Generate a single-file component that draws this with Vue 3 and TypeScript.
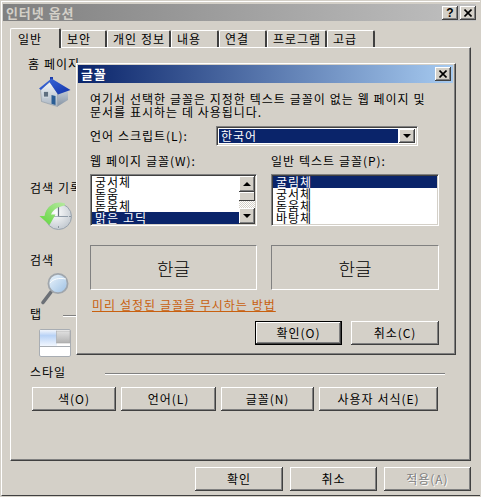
<script setup lang="ts">
const tabs: string[] = ['일반', '보안', '개인 정보', '내용', '연결', '프로그램', '고급']
const webFonts: string[] = ['궁서체', '돋움', '돋움체', '맑은 고딕']
const textFonts: string[] = ['굴림체', '궁서체', '돋움체', '바탕체']
</script>

<template>
  <div class="window">
    <div class="frame">
      <header class="titlebar inactive">
        <span class="title-text">인터넷 옵션</span>
        <div class="title-buttons">
          <button class="cap help">?</button>
          <button class="cap">
            <svg width="8" height="8" viewBox="0 0 8 8"><path d="M0.5 0.5 7.5 7.5M7.5 0.5 0.5 7.5" stroke="#000" stroke-width="1.6" /></svg>
          </button>
        </div>
      </header>

      <nav class="tabs">
        <div v-for="(t, i) in tabs" :key="t" class="tab" :class="{ active: i === 0 }">{{ t }}</div>
      </nav>

      <main class="panel">
        <section class="sec sec-home">
          <div class="sec-head"><span class="label home-label">홈 페이지</span><span class="rule"></span></div>
          <svg class="icon" width="46" height="40" viewBox="0 0 46 40">
            <defs>
              <linearGradient id="wall" x1="0" y1="0" x2="0" y2="1"><stop offset="0" stop-color="#f2f5f8" /><stop offset="1" stop-color="#a9b5c2" /></linearGradient>
              <linearGradient id="wall2" x1="0" y1="0" x2="0" y2="1"><stop offset="0" stop-color="#c4ccd6" /><stop offset="1" stop-color="#8593a3" /></linearGradient>
              <linearGradient id="roof" x1="0" y1="0" x2="1" y2="1"><stop offset="0" stop-color="#3f6fe0" /><stop offset="1" stop-color="#1232a8" /></linearGradient>
            </defs>
            <path d="M28 22 38 18V28L27.5 34.5Z" fill="url(#wall2)" />
            <path d="M10.5 17 20 10 27.5 21V34.5L11.5 29.5Z" fill="url(#wall)" stroke="#8c97a4" stroke-width=".6" />
            <rect x="20" y="5" width="3" height="4" fill="#1d3caa" />
            <path d="M21.5 6.5 40.5 18 28 22.5 19.5 10 11 18 9 16.5Z" fill="url(#roof)" />
            <rect x="13.5" y="19.5" width="5" height="5.5" fill="#5f6f80" stroke="#dfe5ea" stroke-width=".7" />
            <path d="M21.5 23 25.5 24V33L21.5 31.8Z" fill="#2a5d94" />
          </svg>
        </section>

        <section class="sec sec-history">
          <div class="sec-head"><span class="label label-wide">검색 기록</span><span class="rule"></span></div>
          <svg class="icon icon-low" width="46" height="40" viewBox="0 0 46 40">
            <defs>
              <radialGradient id="face" cx=".4" cy=".35" r=".8"><stop offset="0" stop-color="#fff" /><stop offset="1" stop-color="#b8c0c8" /></radialGradient>
              <linearGradient id="green" x1="0" y1="1" x2="1" y2="0"><stop offset="0" stop-color="#5fd63a" /><stop offset="1" stop-color="#b6e8a0" /></linearGradient>
            </defs>
            <circle cx="28.5" cy="18.5" r="13" fill="url(#face)" stroke="#98a2ac" />
            <path d="M28.5 9V18.5H38" fill="none" stroke="#68747f" stroke-width="1.2" />
            <path d="M20 18.5H38" stroke="#9aa6b2" stroke-width=".8" />
            <g fill="#8c96a0">
              <rect x="28" y="7" width="1" height="2" /><rect x="28" y="28" width="1" height="2" /><rect x="39" y="18" width="2" height="1" />
            </g>
            <path d="M35 5.5C26 2.5 17 7 14.5 18H9.5L19.5 27 25.5 16.5H21C23 11.5 28 8.5 35 7.5Z" fill="url(#green)" />
          </svg>
        </section>

        <section class="sec sec-search">
          <div class="sec-head"><span class="label label-wide">검색</span><span class="rule"></span></div>
          <svg class="icon" width="46" height="40" viewBox="0 0 46 40">
            <defs>
              <linearGradient id="lens" x1="0" y1="0" x2="1" y2="1"><stop offset="0" stop-color="#eef6fc" /><stop offset="1" stop-color="#9cc0e4" /></linearGradient>
            </defs>
            <path d="M13 34.5 21 24" stroke="#6c7076" stroke-width="3.6" stroke-linecap="round" />
            <circle cx="28" cy="15.5" r="9.6" fill="url(#lens)" stroke="#a0a6ac" stroke-width="1.8" />
            <path d="M20 15C23 11 29 9.5 36 11" fill="none" stroke="#ffffff" stroke-width=".9" />
          </svg>
        </section>

        <section class="sec sec-tabs">
          <div class="sec-head"><span class="label label-tab">탭</span><span class="rule"></span></div>
          <svg class="icon" width="46" height="40" viewBox="0 0 46 40">
            <defs>
              <linearGradient id="tabBlue" x1="0" y1="0" x2="0" y2="1"><stop offset="0" stop-color="#f2f5fb" /><stop offset=".35" stop-color="#b8d2f6" /><stop offset="1" stop-color="#f2f7fe" /></linearGradient>
              <linearGradient id="tabGray" x1="0" y1="0" x2="0" y2="1"><stop offset="0" stop-color="#e0e0e0" /><stop offset="1" stop-color="#b2b2b2" /></linearGradient>
            </defs>
            <rect x="9.5" y="7.5" width="31" height="27" rx="1.5" fill="#fff" stroke="#a8adb3" />
            <rect x="10" y="8" width="17" height="16" fill="url(#tabBlue)" />
            <rect x="26.5" y="9" width="13.5" height="12" fill="url(#tabGray)" stroke="#a8a8a8" stroke-width=".6" />
            <path d="M10 24.5H40.5" stroke="#a8adb3" />
          </svg>
        </section>

        <section class="sec-style">
          <div class="sec-head"><span class="label label-style">스타일</span><span class="rule"></span></div>
          <div class="style-buttons">
            <button class="btn w-color">색(O)</button>
            <button class="btn w-lang">언어(L)</button>
            <button class="btn w-font">글꼴(N)</button>
            <button class="btn w-custom">사용자 서식(E)</button>
          </div>
        </section>
      </main>

      <footer class="footer">
        <button class="btn w-ok">확인</button>
        <button class="btn w-foot">취소</button>
        <button class="btn w-foot disabled">적용(A)</button>
      </footer>
    </div>

    <div class="dialog">
      <header class="titlebar active-title">
        <span class="title-text">글꼴</span>
        <button class="cap">
          <svg width="8" height="8" viewBox="0 0 8 8"><path d="M0.5 0.5 7.5 7.5M7.5 0.5 0.5 7.5" stroke="#000" stroke-width="1.6" /></svg>
        </button>
      </header>
      <div class="dlg-body">
        <p class="intro">여기서 선택한 글꼴은 지정한 텍스트 글꼴이 없는 웹 페이지 및<br />문서를 표시하는 데 사용됩니다.</p>
        <div class="combo-row">
          <span class="combo-label">언어 스크립트(L):</span>
          <div class="combo">
            <span class="combo-value">한국어</span>
            <span class="sb-btn combo-btn"><i class="tri down"></i></span>
          </div>
        </div>
        <div class="font-grid">
          <span class="col-label">웹 페이지 글꼴(W):</span>
          <span class="col-label">일반 텍스트 글꼴(P):</span>
          <div class="list">
            <div class="rows">
              <div v-for="(f, i) in webFonts" :key="f" class="row" :class="{ sel: i === 3 }">{{ f }}</div>
            </div>
            <div class="scroll">
              <span class="sb-btn"><i class="tri up"></i></span>
              <span class="thumb"></span>
              <span class="track"></span>
              <span class="sb-btn"><i class="tri down"></i></span>
            </div>
          </div>
          <div class="list">
            <div class="rows">
              <div v-for="(f, i) in textFonts" :key="f" class="row" :class="{ sel: i === 0 }">{{ f }}</div>
            </div>
          </div>
          <div class="preview">한글</div>
          <div class="preview">한글</div>
        </div>
        <a class="link">미리 설정된 글꼴을 무시하는 방법</a>
        <div class="dlg-actions">
          <button class="btn default w-dok">확인(O)</button>
          <button class="btn w-dcancel">취소(C)</button>
        </div>
      </div>
    </div>
  </div>
</template>

<style scoped>
.window {
  position: relative;
  box-sizing: border-box;
  width: 481px;
  height: 497px;
  overflow: hidden;
  border: 1px solid #d4d0c8;
  background: #d4d0c8;
  color: #000;
  font-family: "Noto Sans CJK KR", "Liberation Sans", sans-serif;
  font-size: 12px;
  letter-spacing: 0.96px;
  word-spacing: 0.3px;
  line-height: 14px;
}
.frame {
  box-sizing: border-box;
  height: 100%;
  padding: 2px 4px 0 1px;
  border-top: 1px solid #fff;
  border-left: 1px solid #fff;
  border-bottom: 1px solid #404040;
}
.titlebar {
  display: flex;
  align-items: center;
  justify-content: space-between;
  box-sizing: border-box;
}
.titlebar.inactive {
  height: 17px;
  padding: 0 0 0 3px;
  background: linear-gradient(90deg, #808080, #c0c0c0);
  color: #d4d0c8;
}
.title-text {
  font-size: 13px;
  font-weight: 700;
  letter-spacing: 0.9px;
}
.title-buttons {
  display: flex;
  gap: 2px;
}
.cap {
  display: flex;
  align-items: center;
  justify-content: center;
  box-sizing: border-box;
  width: 16px;
  height: 14px;
  padding: 0;
  border: 0;
  background: #d4d0c8;
  box-shadow: inset -1px -1px #404040, inset 1px 1px #fff, inset -2px -2px #808080;
  font: 700 12px/14px "Liberation Sans", sans-serif;
  color: #000;
}
.tabs {
  display: flex;
  align-items: flex-end;
  height: 19px;
  margin: 7px 0 0 7px;
}
.tab {
  box-sizing: border-box;
  height: 17px;
  padding: 1px 0 0 5px;
  background: #d4d0c8;
  border-top: 1px solid #fff;
  border-left: 1px solid #fff;
  border-right: 2px solid #404040;
  border-top-left-radius: 2px;
  border-top-right-radius: 2px;
  white-space: nowrap;
}
.tab:nth-child(1) { width: 51px; }
.tab:nth-child(2) { width: 46px; }
.tab:nth-child(3) { width: 64px; }
.tab:nth-child(4) { width: 48px; }
.tab:nth-child(5) { width: 48px; }
.tab:nth-child(6) { width: 60px; }
.tab:nth-child(7) { width: 48px; }
.tab.active {
  position: relative;
  z-index: 1;
  height: 20px;
  margin-bottom: -1px;
  padding: 3px 0 0 7px;
}
.panel {
  box-sizing: border-box;
  width: 461px;
  height: 414px;
  margin-left: 7px;
  padding: 9px 25px 0 19px;
  border-top: 1px solid #fff;
  border-left: 1px solid #fff;
  border-right: 1px solid #404040;
  border-bottom: 1px solid #404040;
  box-shadow: inset -1px -1px #808080;
}
.sec-home { height: 124px; }
.sec-history { height: 72px; }
.sec-search { height: 54px; }
.sec-tabs { height: 58px; }
.sec-head {
  display: flex;
  align-items: center;
  height: 14px;
}
.label { flex: none; white-space: nowrap; }
.home-label { margin-left: -2px; width: 77px; }
.label-wide { width: 77px; }
.label-tab { width: 33px; }
.label-style { width: 75px; }
.rule {
  flex: 1;
  height: 2px;
  margin-top: 3px;
  box-sizing: border-box;
  border-top: 1px solid #808080;
  border-bottom: 1px solid #fff;
}
.icon {
  display: block;
  margin-top: 1px;
}
.icon-low { margin-top: 3px; }
.style-buttons {
  display: flex;
  gap: 5px;
  margin: 8px 0 0 2px;
}
.btn {
  box-sizing: border-box;
  height: 24px;
  padding: 0;
  border: 0;
  background: #d4d0c8;
  color: #000;
  box-shadow: inset -1px -1px #404040, inset 1px 1px #fff, inset -2px -2px #808080;
  font: inherit;
  letter-spacing: inherit;
  word-spacing: inherit;
}
.btn.default {
  box-shadow: inset 0 0 0 1px #000, inset -2px -2px #404040, inset 2px 2px #fff, inset -3px -3px #808080;
}
.btn.disabled {
  color: #808080;
  text-shadow: 1px 1px #fff;
}
.w-color { width: 84px; }
.w-lang { width: 95px; }
.w-font { width: 93px; }
.w-custom { width: 119px; }
.w-ok { width: 88px; }
.w-foot { width: 87px; }
.w-dok { width: 87px; }
.w-dcancel { width: 88px; }
.footer {
  display: flex;
  justify-content: flex-end;
  gap: 7px;
  width: 468px;
  margin-top: 6px;
}
.dialog {
  position: absolute;
  left: 75px;
  top: 62px;
  box-sizing: border-box;
  width: 380px;
  height: 292px;
  padding: 1px 2px 0 1px;
  background: #d4d0c8;
  border-top: 1px solid #fff;
  border-left: 1px solid #fff;
  border-right: 1px solid #404040;
  border-bottom: 1px solid #404040;
  box-shadow: inset -1px -1px #808080;
}
.active-title {
  height: 18px;
  padding: 0 2px 0 3px;
  background: linear-gradient(90deg, #0a246a, #a6caf0);
  color: #fff;
}
.dlg-body {
  padding: 9px 0 0 12px;
}
.intro {
  margin: 0;
  line-height: 13px;
  white-space: nowrap;
}
.combo-row {
  display: flex;
  align-items: center;
  margin-top: 8px;
}
.combo-label { width: 126px; white-space: nowrap; }
.combo {
  display: flex;
  box-sizing: border-box;
  width: 202px;
  height: 20px;
  padding: 2px;
  background: #fff;
  border-top: 1px solid #808080;
  border-left: 1px solid #808080;
  border-right: 1px solid #fff;
  border-bottom: 1px solid #fff;
  box-shadow: inset 1px 1px #404040, inset -1px -1px #d4d0c8;
}
.combo-value {
  flex: 1;
  padding-left: 2px;
  background: #0a246a;
  color: #fff;
}
.sb-btn {
  display: flex;
  flex: none;
  align-items: center;
  justify-content: center;
  box-sizing: border-box;
  width: 16px;
  height: 16px;
  background: #d4d0c8;
  box-shadow: inset -1px -1px #404040, inset 1px 1px #fff, inset -2px -2px #808080;
}
.combo-btn { height: 14px; margin-left: 1px; }
.tri {
  display: block;
  width: 0;
  height: 0;
  border-left: 4px solid transparent;
  border-right: 4px solid transparent;
}
.tri.down { border-top: 4px solid #000; }
.tri.up { border-bottom: 4px solid #000; }
.font-grid {
  display: grid;
  grid-template-columns: 167px 168px;
  column-gap: 14px;
  margin-top: 8px;
}
.col-label {
  height: 14px;
  margin-bottom: 6px;
  white-space: nowrap;
}
.list {
  display: flex;
  box-sizing: border-box;
  height: 52px;
  overflow: hidden;
  background: #fff;
  border-top: 1px solid #808080;
  border-left: 1px solid #808080;
  border-right: 1px solid #fff;
  border-bottom: 1px solid #fff;
  box-shadow: inset 1px 1px #404040, inset -1px -1px #d4d0c8;
  padding: 1px;
}
.rows {
  flex: 1;
  min-width: 0;
  overflow: hidden;
}
.row {
  height: 12px;
  padding-left: 3px;
  line-height: 12px;
  white-space: nowrap;
}
.row.sel {
  background: #0a246a;
  color: #fff;
}
.scroll {
  display: flex;
  flex: none;
  flex-direction: column;
  width: 16px;
  height: 48px;
}
.thumb {
  flex: none;
  height: 9px;
  background: #d4d0c8;
  box-shadow: inset -1px -1px #404040, inset 1px 1px #fff;
}
.track {
  flex: 1;
  background: repeating-conic-gradient(#fff 0 25%, #d4d0c8 0 50%) 0 0 / 2px 2px;
}
.preview {
  display: flex;
  align-items: center;
  justify-content: center;
  box-sizing: border-box;
  height: 45px;
  margin-top: 19px;
  border-top: 1px solid #808080;
  border-left: 1px solid #808080;
  border-right: 1px solid #fff;
  border-bottom: 1px solid #fff;
  font-size: 18px;
  font-weight: 300;
  letter-spacing: 0;
}
.link {
  display: block;
  margin: 8px 0 0 2px;
  color: #c8600f;
  text-decoration: underline;
  white-space: nowrap;
}
.dlg-actions {
  display: flex;
  justify-content: flex-end;
  gap: 9px;
  width: 349px;
  margin-top: 9px;
}
</style>
